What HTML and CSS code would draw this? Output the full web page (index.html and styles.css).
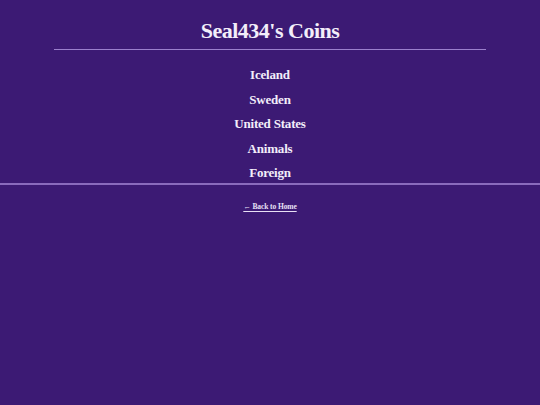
FILE: index.html
```html
<!DOCTYPE html>
<html>
<head>
<meta charset="utf-8">
<link rel="stylesheet" href="styles.css">
</head>
<body>
<header class="header">
  <h1 class="title">Seal434's Coins</h1>
</header>
<nav class="menu">
  <a class="menu-link" href="#">Iceland</a>
  <a class="menu-link" href="#">Sweden</a>
  <a class="menu-link" href="#">United States</a>
  <a class="menu-link" href="#">Animals</a>
  <a class="menu-link" href="#">Foreign</a>
</nav>
<footer class="footer">
  <a class="back" href="#">&larr; Back to Home</a>
</footer>
</body>
</html>
```
FILE: styles.css
```css
html, body {
  margin: 0;
  padding: 0;
  background: #3c1a74;
  color: #f3eefa;
  font-family: "Liberation Serif", "DejaVu Serif", serif;
}
body {
  min-height: 405px;
}
.header {
  width: 80%;
  margin: 0 auto;
  border-bottom: 1px solid #9b80cc;
  padding-top: 19px;
  padding-bottom: 6px;
  text-align: center;
}
.title {
  margin: 0;
  font-size: 22px;
  line-height: 24px;
  font-weight: bold;
  letter-spacing: -0.5px;
}
.menu {
  display: flex;
  flex-direction: column;
  align-items: center;
  gap: 8px;
  padding-top: 17px;
  padding-bottom: 1px;
  border-bottom: 2px solid #8a6bbd;
}
.menu-link {
  color: #f3eefa;
  text-decoration: none;
  font-size: 13px;
  line-height: 16.5px;
  font-weight: bold;
  letter-spacing: -0.2px;
}
.footer {
  text-align: center;
  padding-top: 10px;
}
.back {
  color: #e8e0f5;
  font-size: 7.5px;
  font-weight: bold;
  text-decoration: underline;
  text-underline-offset: 2px;
  letter-spacing: -0.1px;
}
```
